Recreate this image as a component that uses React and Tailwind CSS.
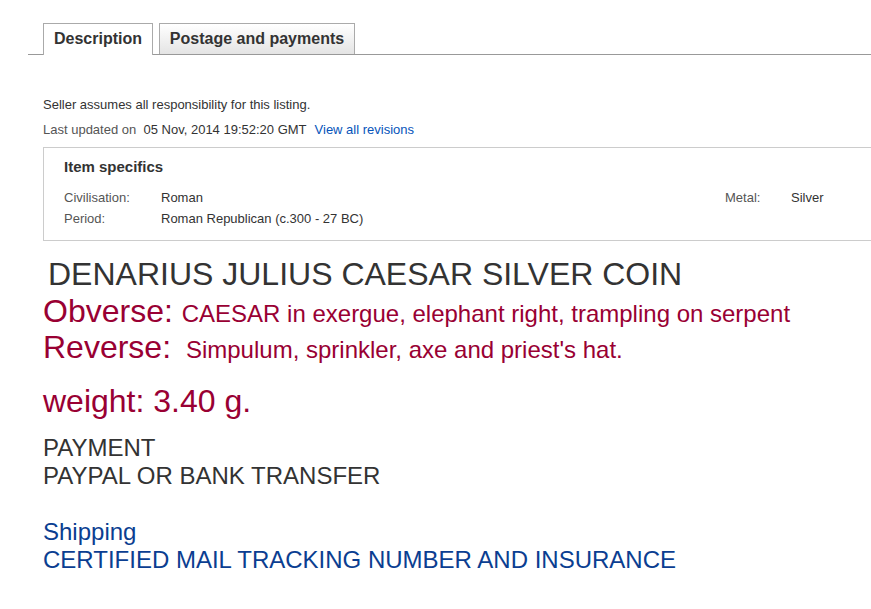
export default function App() {
  const left = [
    ['Civilisation:', 'Roman'],
    ['Period:', 'Roman Republican (c.300 - 27 BC)'],
  ];

  return (
    <div className="min-h-screen overflow-hidden bg-white pl-[28px] pt-[23px] font-['Liberation_Sans',Arial,sans-serif]">
      {/* Tabs */}
      <div className="flex items-end gap-[6px] border-b border-[#999] pl-[15px]">
        <div className="-mb-px h-[32px] w-[110px] border border-b-0 border-[#aaa] bg-white text-center text-[16px] font-bold leading-[30px] text-[#333]">
          Description
        </div>
        <div className="h-[31px] w-[196px] border border-b-0 border-[#aaa] bg-gradient-to-b from-white to-[#e4e4e4] text-center text-[16px] font-bold leading-[29px] text-[#333]">
          Postage and payments
        </div>
      </div>

      <div className="pl-[15px]">
        <p className="mt-[42px] text-[13px] leading-[16px] text-[#333]">
          Seller assumes all responsibility for this listing.
        </p>
        <p className="mt-[9px] text-[13px] leading-[16px] text-[#555]">
          Last updated on&nbsp; <span className="text-[#333]">05 Nov, 2014 19:52:20 GMT</span>
          <span className="ml-[8px] text-[#0654ba]">View all revisions</span>
        </p>

        {/* Item specifics */}
        <div className="mt-[9px] w-[860px] border border-[#ccc] px-[20px] pb-[11px] pt-[10px]">
          <h2 className="text-[15px] font-bold leading-[18px] text-[#333]">Item specifics</h2>
          <div className="mt-[11px] flex">
            <div className="w-[661px]">
              {left.map(([k, v]) => (
                <div key={k} className="flex text-[13px] leading-[21px]">
                  <span className="w-[97px] text-[#555]">{k}</span>
                  <span className="text-[#333]">{v}</span>
                </div>
              ))}
            </div>
            <div className="flex text-[13px] leading-[21px]">
              <span className="w-[66px] text-[#555]">Metal:</span>
              <span className="text-[#333]">Silver</span>
            </div>
          </div>
        </div>

        {/* Description body */}
        <h1 className="ml-[5px] mt-[15px] text-[32px] leading-[37px] text-[#333]">
          DENARIUS JULIUS CAESAR SILVER COIN
        </h1>
        <p className="text-[32px] leading-[36px] text-[#990033]">
          Obverse: <span className="text-[24px] leading-none">CAESAR in exergue, elephant right, trampling on serpent</span>
        </p>
        <p className="text-[32px] leading-[36px] text-[#990033]">
          Reverse: <span className="ml-[6px] text-[24px] leading-none">Simpulum, sprinkler, axe and priest's hat.</span>
        </p>
        <p className="mt-[18px] text-[32px] leading-[36px] text-[#990033]">weight: 3.40 g.</p>

        <div className="mt-[15px] text-[24px] leading-[28px] text-[#333]">
          <p>PAYMENT</p>
          <p>PAYPAL OR BANK TRANSFER</p>
        </div>
        <div className="mt-[28px] text-[24px] leading-[28px] text-[#0b3e91]">
          <p>Shipping</p>
          <p>CERTIFIED MAIL TRACKING NUMBER AND INSURANCE</p>
        </div>
      </div>
    </div>
  );
}
